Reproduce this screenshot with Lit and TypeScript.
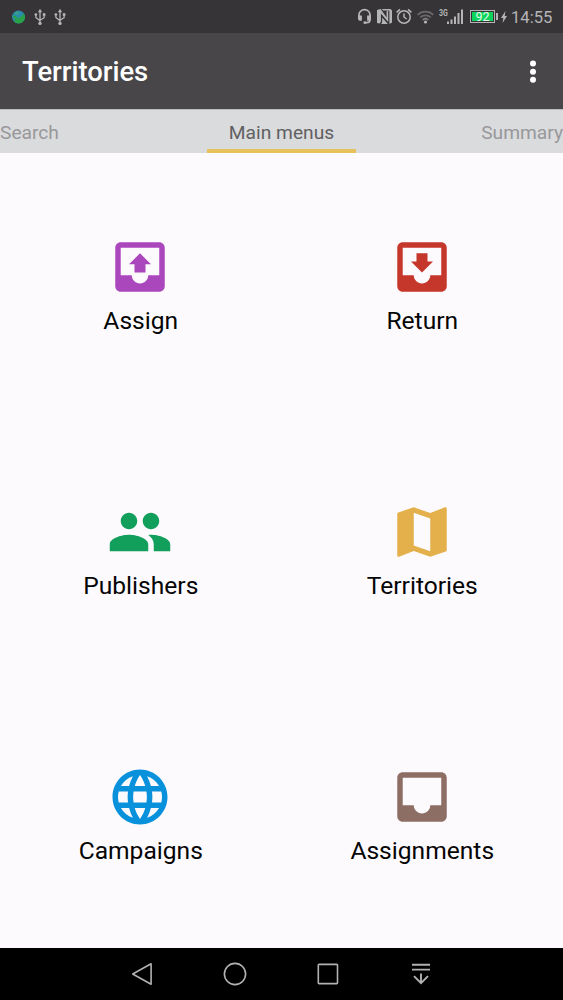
import { LitElement, html, css } from "lit";
import { customElement, property } from "lit/decorators.js";

const TRAY =
  "M19 3H4.99c-1.11 0-1.98.9-1.98 2L3 19c0 1.1.88 2 1.99 2H19c1.1 0 2-.9 2-2V5c0-1.1-.9-2-2-2zm0 12h-4c0 1.66-1.35 3-3 3s-3-1.34-3-3H4.99V5H19v10z";

const ICONS: Record<string, string> = {
  assign: TRAY + "M16 11h-2v3h-4v-3H8l4-4 4 4z",
  return: TRAY + "M16 10h-2V7h-4v3H8l4 4 4-4z",
  people:
    "M16 11c1.66 0 2.99-1.34 2.99-3S17.66 5 16 5c-1.66 0-3 1.34-3 3s1.34 3 3 3zm-8 0c1.66 0 2.99-1.34 2.99-3S9.66 5 8 5C6.34 5 5 6.34 5 8s1.34 3 3 3zm0 2c-2.33 0-7 1.17-7 3.5V19h14v-2.5c0-2.33-4.67-3.5-7-3.5zm8 0c-.29 0-.62.02-.97.05 1.16.84 1.97 1.97 1.97 3.45V19h6v-2.5c0-2.33-4.67-3.5-7-3.5z",
  map: "M20.5 3l-.16.03L15 5.1 9 3 3.36 4.9c-.21.07-.36.25-.36.48V20.5c0 .28.22.5.5.5l.16-.03L9 18.9l6 2.1 5.64-1.9c.21-.07.36-.25.36-.48V3.5c0-.28-.22-.5-.5-.5zM15 19l-6-2.11V5l6 2.11V19z",
  globe:
    "M11.99 2C6.47 2 2 6.48 2 12s4.47 10 9.99 10C17.52 22 22 17.52 22 12S17.52 2 11.99 2zm6.93 6h-2.95c-.32-1.25-.78-2.45-1.38-3.56 1.84.63 3.37 1.91 4.33 3.56zM12 4.04c.83 1.2 1.48 2.53 1.91 3.96h-3.82c.43-1.43 1.08-2.76 1.91-3.96zM4.26 14C4.1 13.36 4 12.69 4 12s.1-1.36.26-2h3.38c-.08.66-.14 1.32-.14 2 0 .68.06 1.34.14 2H4.26zm.82 2h2.95c.32 1.25.78 2.45 1.38 3.56-1.84-.63-3.37-1.9-4.33-3.56zm2.95-8H5.08c.96-1.66 2.49-2.93 4.33-3.56C8.81 5.55 8.35 6.75 8.03 8zM12 19.96c-.83-1.2-1.48-2.53-1.91-3.96h3.82c-.43 1.43-1.08 2.76-1.91 3.96zM14.34 14H9.66c-.09-.66-.16-1.32-.16-2 0-.68.07-1.35.16-2h4.68c.09.65.16 1.32.16 2 0 .68-.07 1.34-.16 2zm.25 5.56c.6-1.11 1.06-2.31 1.38-3.56h2.95c-.96 1.65-2.49 2.93-4.33 3.56zM16.36 14c.08-.66.14-1.32.14-2 0-.68-.06-1.34-.14-2h3.38c.16.64.26 1.31.26 2s-.1 1.36-.26 2h-3.38z",
  inbox: TRAY,
};

const MENU = [
  { icon: "assign", label: "Assign", tone: "purple" },
  { icon: "return", label: "Return", tone: "red" },
  { icon: "people", label: "Publishers", tone: "green" },
  { icon: "map", label: "Territories", tone: "amber" },
  { icon: "globe", label: "Campaigns", tone: "blue" },
  { icon: "inbox", label: "Assignments", tone: "brown" },
];

@customElement("status-bar")
class StatusBar extends LitElement {
  static styles = css`
    :host {
      display: flex;
      justify-content: space-between;
      box-sizing: border-box;
      height: 33px;
      padding: 0 11px 0 12px;
      background: #363437;
      color: #b5b4b6;
      font-family: Roboto, sans-serif;
    }
    .group {
      display: flex;
      align-items: center;
    }
    .left {
      gap: 8.5px;
    }
    svg {
      display: block;
    }
    .nfc, .wifi {
      margin-left: 5px;
    }
    .alarm {
      margin-left: 4px;
    }
    .net {
      align-self: flex-start;
      margin: 8px 0 0 5px;
      width: 8px;
      font-size: 9px;
      line-height: 10px;
      font-weight: 700;
      transform: scaleX(0.78);
      transform-origin: left;
    }
    .signal {
      margin-right: 7px;
    }
    .battery {
      display: flex;
      align-items: center;
    }
    .level {
      box-sizing: border-box;
      width: 25px;
      height: 13px;
      border: 1px solid #b5b4b6;
      padding: 1px;
    }
    .charge {
      background: #0bd35c;
      color: #e4f9ea;
      font-size: 12.5px;
      line-height: 10px;
      height: 9px;
      text-align: center;
    }
    .tip {
      width: 2px;
      height: 7px;
      margin-left: 1px;
      background: #b5b4b6;
    }
    .bolt {
      margin: 0 4px 0 3px;
    }
    .time {
      font-size: 16.6px;
      line-height: 33px;
      padding-top: 1px;
      width: 41px;
      white-space: nowrap;
    }
  `;

  usb() {
    return html`<svg width="12" height="18" viewBox="0 0 12 18" fill="none" stroke="#b5b4b6" stroke-width="1.3">
      <path d="M6 3v11M1.9 7.2v2.3L6 12.7M10.1 7.5v2.2L6 12.2" />
      <path d="M6 .8L3.9 4.2h4.2z" fill="#b5b4b6" stroke="none" />
      <circle cx="6" cy="15.4" r="1.7" fill="#b5b4b6" stroke="none" />
      <circle cx="1.9" cy="6.6" r="1.4" fill="#b5b4b6" stroke="none" />
      <path d="M8.8 5.2h2.6v2.7H8.8z" fill="#b5b4b6" stroke="none" />
    </svg>`;
  }

  render() {
    return html`
      <div class="group left">
        <svg width="13" height="14" viewBox="0 0 13 14">
          <circle cx="6.5" cy="7" r="6.5" fill="#2a8cab" />
          <path d="M.5 6l2.5-.5 3.2 3.2L12 3.8a6.5 6.5 0 0 1-.7 7.6A6.5 6.5 0 0 1 2 11.6L3.5 10z" fill="#28a148" />
          <path d="M3 2.2l3-1 .8 2.1L4 5z" fill="#3aa184" />
        </svg>
        ${this.usb()}${this.usb()}
      </div>
      <div class="group">
        <svg width="15" height="17" viewBox="0 0 15 17" fill="none" stroke="#b5b4b6" stroke-width="1.7">
          <path d="M1.9 9V7.2a5.6 5.6 0 0 1 11.2 0v4.3c0 2-1.3 3.2-3.3 3.2H8" />
          <path d="M1 7.5h3.9v5.3H3a2 2 0 0 1-2-2zM10.1 7.5H14v3.3a2 2 0 0 1-2 2h-1.9z" fill="#b5b4b6" stroke="none" />
          <circle cx="7.8" cy="14.7" r="1.4" fill="#b5b4b6" stroke="none" />
        </svg>
        <svg class="nfc" width="15" height="15" viewBox="0 0 15 15" fill="#b5b4b6">
          <path d="M0 1L3.6 0 9.6 8.4V2.2L11.2 1.2V13L3.9 4.4v8.4L2.6 14.6 0 14z" />
          <path d="M5 0h8.4L15 1.4v12.2L12.4 15V1.4H6zM4.2 15l1-2V8.4L10.8 15z" />
        </svg>
        <svg class="alarm" width="16" height="17" viewBox="0 0 16 17" fill="none" stroke="#b5b4b6" stroke-width="1.5">
          <circle cx="8" cy="9" r="6.2" />
          <path d="M8 5.5V9l2.6 2M.6 4.4L4 1.4M15.4 4.4L12 1.4" />
        </svg>
        <svg class="wifi" width="17" height="14" viewBox="0 0 17 14" fill="none" stroke="#69686a" stroke-width="1.7">
          <path d="M.7 4.8a11.2 11.2 0 0 1 15.6 0M3.2 7.5a7.6 7.6 0 0 1 10.6 0" />
          <path d="M5.7 10a4.1 4.1 0 0 1 5.6 0" stroke="#858486" />
          <circle cx="8.5" cy="12" r="1.6" fill="#b5b4b6" stroke="none" />
        </svg>
        <span class="net">3G</span>
        <svg class="signal" width="16" height="15" viewBox="0 0 16 15" fill="#b5b4b6">
          <path d="M0 12.5h2V15H0zM3.5 10.5h2V15h-2zM7 7.5h2V15H7zM10.5 4h2v11h-2zM14 .5h2V15h-2z" />
        </svg>
        <div class="battery">
          <div class="level"><div class="charge">92</div></div>
          <div class="tip"></div>
        </div>
        <svg class="bolt" width="6" height="12" viewBox="0 0 6 12" fill="#b5b4b6">
          <path d="M4.4 0L0 6.9h2.3L1.6 12 6 4.9H3.7z" />
        </svg>
        <span class="time">14:55</span>
      </div>
    `;
  }
}

@customElement("menu-tile")
class MenuTile extends LitElement {
  @property() icon = "";
  @property() label = "";
  @property() tone = "";

  static styles = css`
    :host {
      display: flex;
      flex-direction: column;
      align-items: center;
      justify-content: center;
      font-family: Roboto, sans-serif;
    }
    .icon {
      width: 66px;
      height: 66px;
      margin: -1px 1px 0 0;
    }
    .label {
      height: 36px;
      font-size: 24.6px;
      line-height: 42px;
      color: #050505;
      white-space: nowrap;
    }
    .purple { fill: #ab47bc; }
    .red { fill: #c5372b; }
    .green { fill: #129f5c; }
    .amber { fill: #e3b04b; }
    .blue { fill: #0a91dc; }
    .brown { fill: #8d6e64; }
  `;

  render() {
    return html`
      <svg class="icon ${this.tone}" viewBox="0 0 24 24"><path d=${ICONS[this.icon]} /></svg>
      <span class="label">${this.label}</span>
    `;
  }
}

@customElement("app-root")
class AppRoot extends LitElement {
  static styles = css`
    :host {
      display: flex;
      flex-direction: column;
      height: 1000px;
      background: #fcfafd;
      font-family: Roboto, sans-serif;
    }
    .appbar {
      display: flex;
      align-items: center;
      justify-content: space-between;
      box-sizing: border-box;
      height: 76px;
      padding: 1px 26px 0 22px;
      background: #484649;
    }
    .title {
      color: #fff;
      font-size: 27.4px;
      font-weight: 500;
    }
    .tabs {
      display: grid;
      grid-template-columns: 1fr 149px 1fr;
      box-sizing: border-box;
      height: 44px;
      border-top: 1px solid #bcbbbd;
      background: #dadbdd;
      font-size: 19.2px;
      line-height: 46px;
      color: #98989a;
    }
    .current {
      box-sizing: border-box;
      height: 43px;
      border-bottom: 4px solid #e6c15c;
      text-align: center;
      color: #606062;
    }
    .last {
      text-align: right;
    }
    .menu {
      display: grid;
      flex: 1;
      grid-template-columns: 1fr 1fr;
      grid-template-rows: repeat(3, 1fr);
    }
    .nav {
      display: flex;
      justify-content: center;
      gap: 69px;
      align-items: center;
      height: 52px;
      background: #000;
    }
    .nav svg {
      fill: none;
      stroke: #b3b1b3;
      stroke-width: 1.6;
    }
  `;

  render() {
    return html`
      <status-bar></status-bar>
      <header class="appbar">
        <span class="title">Territories</span>
        <svg width="8" height="24" viewBox="0 0 8 24" fill="#fff">
          <circle cx="4" cy="3.6" r="3" />
          <circle cx="4" cy="11.7" r="3" />
          <circle cx="4" cy="19.8" r="3" />
        </svg>
      </header>
      <nav class="tabs">
        <span>Search</span>
        <span class="current">Main menus</span>
        <span class="last">Summary</span>
      </nav>
      <main class="menu">
        ${MENU.map(
          (m) => html`<menu-tile .icon=${m.icon} .label=${m.label} .tone=${m.tone}></menu-tile>`
        )}
      </main>
      <footer class="nav">
        <svg width="24" height="24" viewBox="0 0 24 24"><path d="M21.1 1.8v20.4L2.7 12z" stroke-linejoin="round" /></svg>
        <svg width="24" height="24" viewBox="0 0 24 24"><circle cx="12" cy="12" r="10.6" /></svg>
        <svg width="24" height="24" viewBox="0 0 24 24"><rect x="2.3" y="2.4" width="19.2" height="19.2" rx=".8" /></svg>
        <svg width="24" height="24" viewBox="0 0 24 24"><path d="M3 2.8h18M3 7.6h18M12 11.5v9.4M5 14.2l7 7 7-7" stroke-width="1.9" /></svg>
      </footer>
    `;
  }
}
